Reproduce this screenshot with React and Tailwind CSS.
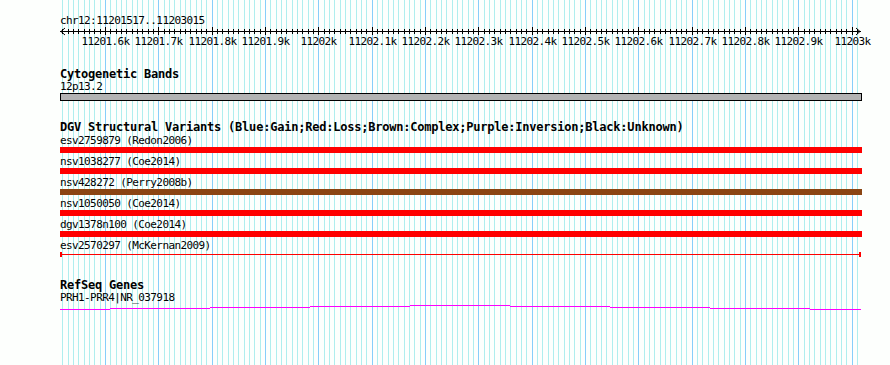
// App.jsx - GBrowse style track panel
const START = 11201517;
// pixel position of a base on the 800px wide panel
const xOf = (bp) => Math.round(60.7 + (bp - START) * 0.53336);

const ticks = [];
for (let bp = 11201520; bp <= 11203010; bp += 10) ticks.push(bp);

const variants = [
  { name: "esv2759879 (Redon2006)", color: "bg-[#ff0000]" },
  { name: "nsv1038277 (Coe2014)", color: "bg-[#ff0000]" },
  { name: "nsv428272 (Perry2008b)", color: "bg-[#8b4513]" },
  { name: "nsv1050050 (Coe2014)", color: "bg-[#ff0000]" },
  { name: "dgv1378n100 (Coe2014)", color: "bg-[#ff0000]" },
];

// gene model drawn as a stepped line
const geneSteps = [
  [0, 50, 5], [50, 150, 4], [150, 250, 3], [250, 350, 2], [350, 450, 1],
  [450, 550, 2], [550, 650, 3], [650, 750, 4], [750, 801, 5],
];

function Grid() {
  return (
    <svg className="absolute inset-0" width="890" height="365">
      {ticks.map((bp) => (
        <rect
          key={bp}
          x={xOf(bp)}
          y="0"
          width="1"
          height="365"
          fill={bp % 100 === 0 ? "#87cefa" : "#afeeee"}
        />
      ))}
    </svg>
  );
}

function Ruler() {
  return (
    <svg className="block" width="890" height="21">
      <rect x="60" y="4" width="801" height="1" fill="#000" />
      {/* arrow heads */}
      <polyline points="65,1 61,4.5 65,8" fill="none" stroke="#000" strokeWidth="1" />
      <polyline points="856,1 860,4.5 856,8" fill="none" stroke="#000" strokeWidth="1" />
      {ticks.map((bp) => {
        const major = bp % 100 === 0;
        return (
          <rect
            key={bp}
            x={xOf(bp)}
            y={major ? 0 : 2}
            width="1"
            height={major ? 8 : 5}
            fill="#000"
          />
        );
      })}
      {ticks
        .filter((bp) => bp % 100 === 0)
        .map((bp) => (
          <text
            key={bp}
            x={xOf(bp) + 0.5}
            y="17.5"
            textAnchor="middle"
            className="font-['DejaVu_Sans_Mono',monospace] text-[11px] tracking-[-0.6px]"
            fill="#000"
          >
            {bp / 1000 + "k"}
          </text>
        ))}
    </svg>
  );
}

function Title({ children, className = "" }) {
  return (
    <div className={"ml-[60px] font-bold text-[12px] tracking-[-0.22px] whitespace-nowrap " + className}>
      {children}
    </div>
  );
}

function Label({ children }) {
  return <div className="ml-[60px] h-[13px] text-[11px] leading-[13px] tracking-[-0.6px] whitespace-nowrap">{children}</div>;
}

export default function App() {
  return (
    <div className="relative w-[890px] h-[365px] overflow-hidden bg-[#fdfffd] text-black font-['DejaVu_Sans_Mono',monospace]">
      <Grid />
      <div className="relative pt-[14px]">
        <Label>chr12:11201517..11203015</Label>
        <Ruler />

        <Title className="mt-[20px] h-[12px] leading-[12px]">Cytogenetic Bands</Title>
        <Label>12p13.2</Label>
        <div className="ml-[60px] w-[802px] h-[8px] border border-black bg-[#b3b3b3]" />

        <Title className="mt-[20px] h-[13px] leading-[13px]">
          DGV Structural Variants (Blue:Gain;Red:Loss;Brown:Complex;Purple:Inversion;Black:Unknown)
        </Title>
        <div className="flex flex-col gap-[2px]">
          {variants.map((v) => (
            <div key={v.name}>
              <Label>{v.name}</Label>
              <div className={"ml-[60px] w-[802px] h-[6px] " + v.color} />
            </div>
          ))}
          <div>
            <Label>esv2570297 (McKernan2009)</Label>
            <div className="ml-[60px] w-[801px] h-[6px] flex items-start">
              <div className="w-[2px] h-[5px] bg-[#ff0000]" />
              <div className="flex-1 mt-[2px] h-px bg-[#ff0000]" />
              <div className="w-[2px] h-[5px] bg-[#ff0000]" />
            </div>
          </div>
        </div>

        <Title className="mt-[22px] h-[11px] leading-[11px]">RefSeq Genes</Title>
        <Label>PRH1-PRR4|NR_037918</Label>
        <svg className="block ml-[60px]" width="801" height="6">
          {geneSteps.map(([a, b, y]) => (
            <rect key={a} x={a} y={y} width={b - a} height="1" fill="#ff00ff" />
          ))}
        </svg>
      </div>
    </div>
  );
}
